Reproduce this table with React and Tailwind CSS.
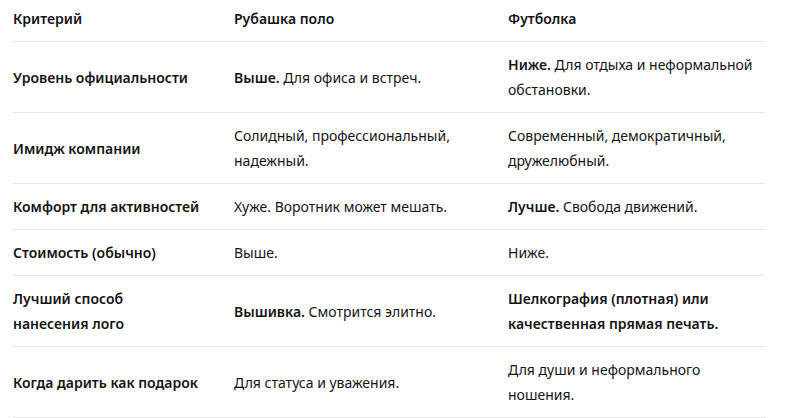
import React from "react";

const rows = [
  {
    c: "Уровень официальности",
    a: [<b key="b" className="font-semibold">Выше.</b>, " Для офиса и встреч."],
    b: [<b key="b" className="font-semibold">Ниже.</b>, " Для отдыха и неформальной обстановки."],
  },
  {
    c: "Имидж компании",
    a: ["Солидный, профессиональный, надежный."],
    b: ["Современный, демократичный, дружелюбный."],
  },
  {
    c: "Комфорт для активностей",
    a: ["Хуже. Воротник может мешать."],
    b: [<b key="b" className="font-semibold">Лучше.</b>, " Свобода движений."],
  },
  {
    c: "Стоимость (обычно)",
    a: ["Выше."],
    b: ["Ниже."],
  },
  {
    c: ["Лучший способ", <br key="br" />, "нанесения лого"],
    a: [<b key="b" className="font-semibold">Вышивка.</b>, " Смотрится элитно."],
    b: [<b key="b" className="font-semibold">Шелкография (плотная) или качественная прямая печать.</b>],
  },
  {
    c: "Когда дарить как подарок",
    a: ["Для статуса и уважения."],
    b: ["Для души и неформального ношения."],
  },
];

export default function App() {
  return (
    <div
      className="w-[791px] h-[418px] bg-white overflow-hidden text-[14px] leading-[25px] text-[#141414]"
      style={{ fontFamily: '"Noto Sans", "Open Sans", sans-serif' }}
    >
      <div className="ml-[13px] w-[752px]">
        <div className="grid grid-cols-[221px_274px_257px] pt-[6px] pb-[10px] border-b border-[#e5e5e5] font-semibold">
          <div>Критерий</div>
          <div>Рубашка поло</div>
          <div>Футболка</div>
        </div>
        {rows.map((r, i) => (
          <div
            key={i}
            className="grid grid-cols-[221px_274px_257px] items-center py-[10px] border-b border-[#e5e5e5]"
          >
            <div className="font-semibold pr-[16px]">{r.c}</div>
            <div className="pr-[16px]">{r.a}</div>
            <div className="pr-[12px]">{r.b}</div>
          </div>
        ))}
      </div>
    </div>
  );
}
